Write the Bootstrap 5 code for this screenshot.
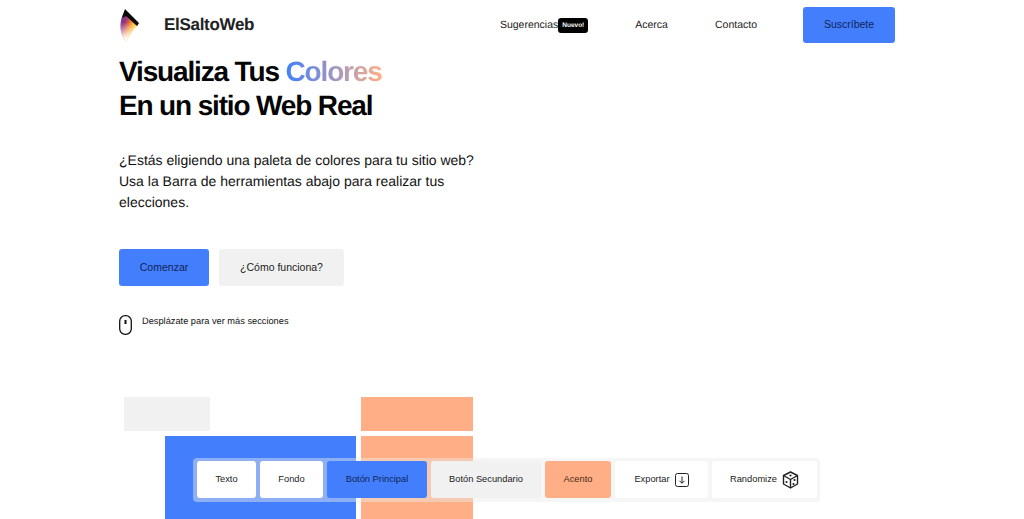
<!DOCTYPE html>
<html lang="es">
<head>
  <meta charset="UTF-8" />
  <meta name="viewport" content="width=device-width, initial-scale=1" />
  <title>ElSaltoWeb</title>
  <link href="https://cdn.jsdelivr.net/npm/bootstrap@5.3.3/dist/css/bootstrap.min.css" rel="stylesheet">
  <style>
    html, body { height: 519px; overflow: hidden; }
    body { font-family: "Liberation Sans", Arial, sans-serif; color: #0a0a0a; background: #fff; position: relative; text-rendering: geometricPrecision; }
    .page-wrap { width: 776px; margin-left: 119px; }
    .top-bar { height: 50px; }
    .brand-name { font-size: 17px; font-weight: 700; letter-spacing: -0.3px; margin-left: 25px; color: #222; }
    .menu-link { font-size: 10.5px; color: #222; text-decoration: none; }
    .new-tag { background: #000; color: #fff; font-size: 6.5px; font-weight: 700; padding: 4px 4px; border-radius: 3px; line-height: 7px; }
    .menu-gap { gap: 47px; margin-right: 46px; padding-top: 1px; }
    .sub-btn { background: #437ffc; color: #10245a; font-size: 10.5px; width: 92px; height: 36px; border: 0; border-radius: 3px; padding: 0; }
    .hero-title { font-size: 28px; font-weight: 700; line-height: 34px; letter-spacing: -1.15px; margin: 5px 0 0; color: #050505; }
    .grad-word { background: linear-gradient(90deg, #437ffc, #ffae85); -webkit-background-clip: text; background-clip: text; color: transparent; }
    .hero-text { font-size: 14px; line-height: 21px; width: 370px; margin: 27px 0 0; color: #111; }
    .hero-btns { gap: 10px; margin-top: 36px; }
    .cta-main { background: #437ffc; color: #10245a; font-size: 10.5px; width: 90px; height: 37px; border: 0; border-radius: 3px; padding: 0; }
    .cta-alt { background: #f1f1f1; color: #222; font-size: 10.5px; width: 125px; height: 37px; border: 0; border-radius: 3px; padding: 0; }
    .scroll-hint { font-size: 9.25px; line-height: 12px; gap: 10px; margin-top: 29px; color: #111; }
    .mosaic { display: grid; grid-template-columns: 5px 86px 146px 5px 112px; grid-template-rows: 34px 83px; gap: 5px 0; margin-top: 62px; }
    .tile-gray { background: #f1f1f1; grid-column: 2; grid-row: 1; }
    .tile-orange { background: #ffae85; grid-column: 5; }
    .tile-blue { background: #437ffc; grid-column: 2 / 4; grid-row: 2; margin-left: 41px; }
    .tool-bar { position: absolute; left: 193px; top: 458px; width: 627px; height: 44px; padding: 3px 3px 3px 4px; gap: 4px; background: rgba(235, 235, 235, .45); border-radius: 4px; }
    .tool-btn { flex: none; height: 37px; font-size: 9.3px; border: 0; padding: 0; border-radius: 3px; color: #222; background: #fff; display: flex; align-items: center; justify-content: center; gap: 5px; }
    .tool-blue { background: #437ffc; color: #10245a; }
    .tool-gray { background: #f1f1f1; }
    .tool-orange { background: #ffae85; color: #4a2a18; }
  </style>
</head>
<body>

<div class="page-wrap">
  <!-- Top bar -->
  <nav class="top-bar d-flex align-items-center justify-content-between">
    <div class="d-flex align-items-center">
      <svg width="20" height="32" viewBox="0 0 20 32">
        <defs>
          <linearGradient id="logoFill" x1="0" y1="0" x2="1" y2="0.6">
            <stop offset="0" stop-color="#3a4fb0"/>
            <stop offset="0.35" stop-color="#a0307a"/>
            <stop offset="0.6" stop-color="#f28a1e"/>
            <stop offset="0.85" stop-color="#ffe14a"/>
          </linearGradient>
          <linearGradient id="logoFade" x1="0" y1="0" x2="0" y2="1">
            <stop offset="0.4" stop-color="#fff" stop-opacity="0"/>
            <stop offset="0.95" stop-color="#fff" stop-opacity="1"/>
          </linearGradient>
        </defs>
        <path d="M6 1 L20 15 C15 19 11 27 7 32 C2 27 -2 15 6 1 Z" fill="url(#logoFill)"/>
        <path d="M6 1 L20 15 C15 19 11 27 7 32 C2 27 -2 15 6 1 Z" fill="url(#logoFade)"/>
        <path d="M6 0 L20 14 L18 17 L7 7 L3 9 Z" fill="#0a0a0a"/>
      </svg>
      <span class="brand-name">ElSaltoWeb</span>
    </div>
    <div class="d-flex align-items-center">
      <div class="d-flex align-items-center menu-gap">
        <a class="menu-link d-flex align-items-center" href="#">Sugerencias<span class="new-tag">Nuevo!</span></a>
        <a class="menu-link" href="#">Acerca</a>
        <a class="menu-link" href="#">Contacto</a>
      </div>
      <button class="sub-btn btn" type="button">Suscríbete</button>
    </div>
  </nav>

  <!-- Hero -->
  <h1 class="hero-title">Visualiza Tus <span class="grad-word">Colores</span><br>En un sitio Web Real</h1>
  <p class="hero-text">¿Estás eligiendo una paleta de colores para tu sitio web? Usa la Barra de herramientas abajo para realizar tus elecciones.</p>
  <div class="hero-btns d-flex">
    <button class="cta-main btn" type="button">Comenzar</button>
    <button class="cta-alt btn" type="button">¿Cómo funciona?</button>
  </div>
  <div class="scroll-hint d-flex align-items-start">
    <svg width="13" height="20" viewBox="0 0 13 20"><rect x="0.7" y="0.7" width="11.6" height="18.6" rx="5.5" fill="none" stroke="#111" stroke-width="1.3"/><rect x="5.5" y="5" width="2" height="4" fill="#111"/></svg>
    <span>Desplázate para ver más secciones</span>
  </div>

  <!-- Colour blocks -->
  <div class="mosaic">
    <div class="tile-gray"></div>
    <div class="tile-orange"></div>
    <div class="tile-blue"></div>
    <div class="tile-orange"></div>
  </div>
</div>

<!-- Floating toolbar -->
<div class="tool-bar d-flex">
  <button class="tool-btn" style="width:59px" type="button">Texto</button>
  <button class="tool-btn" style="width:63px" type="button">Fondo</button>
  <button class="tool-btn tool-blue" style="width:100px" type="button">Botón Principal</button>
  <button class="tool-btn tool-gray" style="width:110px" type="button">Botón Secundario</button>
  <button class="tool-btn tool-orange" style="width:66px" type="button">Acento</button>
  <button class="tool-btn" style="width:93px" type="button">Exportar
    <svg width="14" height="14" viewBox="0 0 14 14" fill="none" stroke="#222" stroke-width="1"><rect x="0.5" y="0.5" width="13" height="13" rx="2"/><path d="M7 3.5V10M4.5 7.8 7 10.3 9.5 7.8"/></svg>
  </button>
  <button class="tool-btn" style="width:105px" type="button">Randomize
    <svg width="17" height="18" viewBox="0 0 17 18" fill="none" stroke="#222" stroke-width="1.4" stroke-linejoin="round"><path d="M8.5 1 15.5 4.5V13L8.5 17 1.5 13V4.5Z"/><path d="M1.5 4.5 8.5 8.5 15.5 4.5M8.5 8.5V17"/><circle cx="8.5" cy="4.5" r="1.1" fill="#222" stroke="none"/><circle cx="4.5" cy="11" r="1.1" fill="#222" stroke="none"/><circle cx="12.5" cy="9" r="1.1" fill="#222" stroke="none"/><circle cx="11.5" cy="13" r="1.1" fill="#222" stroke="none"/></svg>
  </button>
</div>

<script src="https://cdn.jsdelivr.net/npm/bootstrap@5.3.3/dist/js/bootstrap.bundle.min.js"></script>
</body>
</html>
